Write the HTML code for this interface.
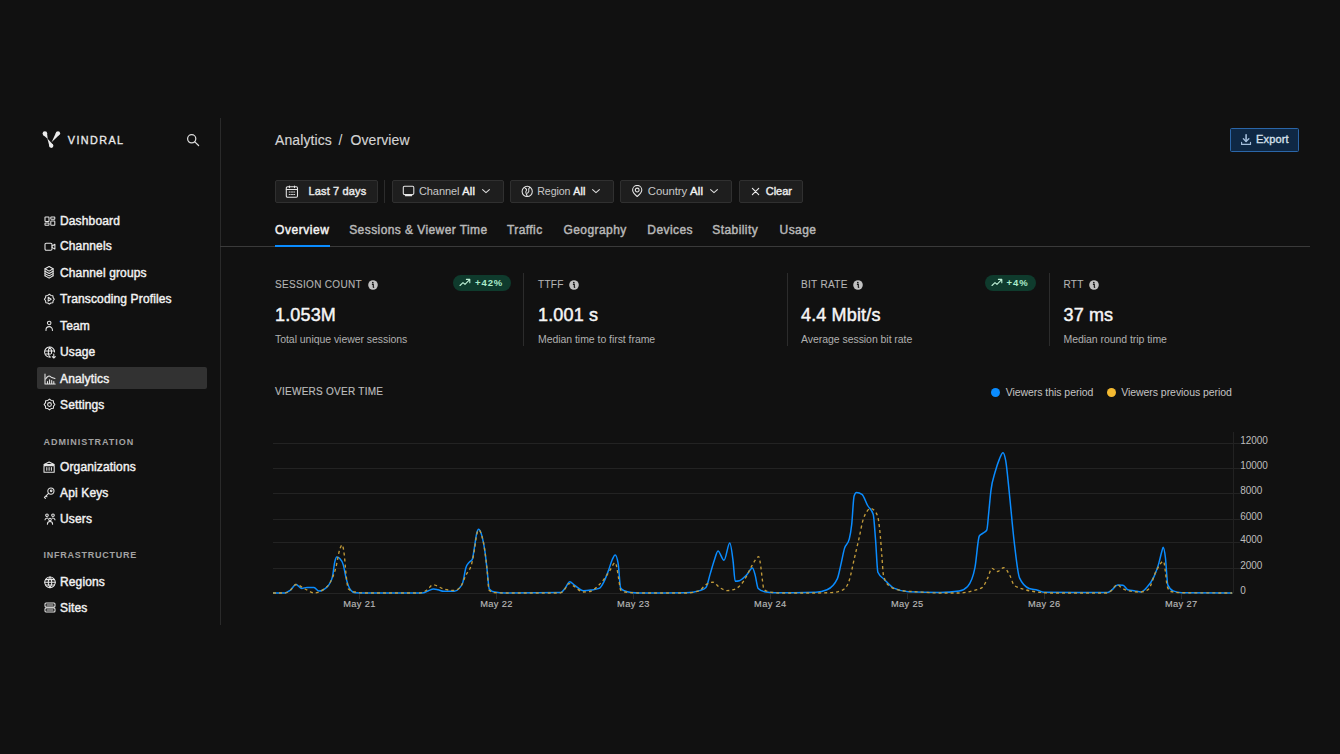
<!DOCTYPE html>
<html><head><meta charset="utf-8"><style>
html,body{margin:0;padding:0;background:#111111;width:1340px;height:754px;overflow:hidden;}
body{position:relative;font-family:"Liberation Sans", sans-serif;}
.t{position:absolute;white-space:nowrap;font-family:"Liberation Sans", sans-serif;}
</style></head><body>
<svg style="position:absolute;left:40px;top:128px;" width="24" height="24" viewBox="0 0 24 24" fill="none"><g fill="#ececec"><circle cx="4.9" cy="5.6" r="2.3"/><path d="M6.9 4.5 L7.8 10.9 L2.9 6.7 Z"/><circle cx="11.3" cy="17.8" r="2.1"/><path d="M13.1 16.8 L7.4 10.6 L9.5 18.8 Z"/><circle cx="18" cy="5.3" r="2.1"/><path d="M19.7 6.5 L11.6 14.3 L16.3 4.1 Z"/></g></svg>
<div class="t" style="left:67.8px;top:135.16px;font-size:10.8px;line-height:10.8px;font-weight:400;color:#ececec;letter-spacing:1.4px;-webkit-text-stroke:0.3px #ececec;">VINDRAL</div>
<svg style="position:absolute;left:182px;top:128px;" width="24" height="24" viewBox="0 0 24 24" fill="none"><circle cx="9.7" cy="10.8" r="4.1" stroke="#dcdcdc" stroke-width="1.25"/><path d="M12.8 13.9 L16.6 17.5" stroke="#dcdcdc" stroke-width="1.25" stroke-linecap="round"/></svg>
<div style="position:absolute;left:220px;top:118px;width:1px;height:507px;background:#2a2a2a"></div>
<div style="position:absolute;left:37px;top:367px;width:170px;height:22.4px;background:#323232;border-radius:2px"></div>
<div class="t" style="left:60px;top:215.34px;font-size:12px;line-height:12px;font-weight:400;color:#f2f2f2;letter-spacing:0.14px;-webkit-text-stroke:0.42px #f2f2f2;">Dashboard</div>
<div class="t" style="left:60px;top:240.34px;font-size:12px;line-height:12px;font-weight:400;color:#f2f2f2;letter-spacing:0.14px;-webkit-text-stroke:0.42px #f2f2f2;">Channels</div>
<div class="t" style="left:60px;top:266.74px;font-size:12px;line-height:12px;font-weight:400;color:#f2f2f2;letter-spacing:0.14px;-webkit-text-stroke:0.42px #f2f2f2;">Channel groups</div>
<div class="t" style="left:60px;top:292.94px;font-size:12px;line-height:12px;font-weight:400;color:#f2f2f2;letter-spacing:0.14px;-webkit-text-stroke:0.42px #f2f2f2;">Transcoding Profiles</div>
<div class="t" style="left:60px;top:319.74px;font-size:12px;line-height:12px;font-weight:400;color:#f2f2f2;letter-spacing:0.14px;-webkit-text-stroke:0.42px #f2f2f2;">Team</div>
<div class="t" style="left:60px;top:346.04px;font-size:12px;line-height:12px;font-weight:400;color:#f2f2f2;letter-spacing:0.14px;-webkit-text-stroke:0.42px #f2f2f2;">Usage</div>
<div class="t" style="left:60px;top:372.54px;font-size:12px;line-height:12px;font-weight:400;color:#f2f2f2;letter-spacing:0.14px;-webkit-text-stroke:0.42px #f2f2f2;">Analytics</div>
<div class="t" style="left:60px;top:398.74px;font-size:12px;line-height:12px;font-weight:400;color:#f2f2f2;letter-spacing:0.14px;-webkit-text-stroke:0.42px #f2f2f2;">Settings</div>
<div class="t" style="left:60px;top:461.04px;font-size:12px;line-height:12px;font-weight:400;color:#f2f2f2;letter-spacing:0.14px;-webkit-text-stroke:0.42px #f2f2f2;">Organizations</div>
<div class="t" style="left:60px;top:486.84px;font-size:12px;line-height:12px;font-weight:400;color:#f2f2f2;letter-spacing:0.14px;-webkit-text-stroke:0.42px #f2f2f2;">Api Keys</div>
<div class="t" style="left:60px;top:513.34px;font-size:12px;line-height:12px;font-weight:400;color:#f2f2f2;letter-spacing:0.14px;-webkit-text-stroke:0.42px #f2f2f2;">Users</div>
<div class="t" style="left:60px;top:576.34px;font-size:12px;line-height:12px;font-weight:400;color:#f2f2f2;letter-spacing:0.14px;-webkit-text-stroke:0.42px #f2f2f2;">Regions</div>
<div class="t" style="left:60px;top:601.84px;font-size:12px;line-height:12px;font-weight:400;color:#f2f2f2;letter-spacing:0.14px;-webkit-text-stroke:0.42px #f2f2f2;">Sites</div>
<div class="t" style="left:43.5px;top:437.88px;font-size:9px;line-height:9px;font-weight:700;color:#a3a3a3;letter-spacing:0.95px;">ADMINISTRATION</div>
<div class="t" style="left:43.5px;top:550.98px;font-size:9px;line-height:9px;font-weight:700;color:#a3a3a3;letter-spacing:0.75px;">INFRASTRUCTURE</div>
<div class="t" style="left:275px;top:133.05px;font-size:14px;line-height:14px;font-weight:400;color:#d4d4d4;letter-spacing:0.1px;-webkit-text-stroke:0.15px #d4d4d4;">Analytics</div>
<div class="t" style="left:338.5px;top:133.05px;font-size:14px;line-height:14px;font-weight:400;color:#d4d4d4;letter-spacing:0px;">/</div>
<div class="t" style="left:350.5px;top:133.05px;font-size:14px;line-height:14px;font-weight:400;color:#d4d4d4;letter-spacing:0.1px;-webkit-text-stroke:0.15px #d4d4d4;">Overview</div>
<div style="position:absolute;left:1230px;top:128px;width:69px;height:24px;box-sizing:border-box;border:1px solid #2b66a8;background:#0f2844;border-radius:1.5px"></div>
<div class="t" style="left:1256px;top:133.79px;font-size:11px;line-height:11px;font-weight:400;color:#d6e1ed;letter-spacing:0.15px;-webkit-text-stroke:0.35px #d6e1ed;">Export</div>
<div style="position:absolute;left:275px;top:180px;width:103px;height:23px;box-sizing:border-box;border:1px solid #303030;background:#1e1e1e;border-radius:2px"></div>
<div class="t" style="left:308.5px;top:185.89px;font-size:11px;line-height:11px;font-weight:400;color:#ececec;letter-spacing:0.15px;-webkit-text-stroke:0.4px #ececec;">Last 7 days</div>
<div style="position:absolute;left:384px;top:180px;width:1px;height:23px;background:#2c2c2c"></div>
<div style="position:absolute;left:392px;top:180px;width:112px;height:23px;box-sizing:border-box;border:1px solid #303030;background:#1e1e1e;border-radius:2px"></div>
<div class="t" style="left:419px;top:185.89px;font-size:11px;line-height:11px;font-weight:400;color:#c8c8c8;letter-spacing:-0.1px;">Channel <span style="color:#f2f2f2;-webkit-text-stroke:0.4px #f2f2f2;letter-spacing:0.2px">All</span></div>
<div style="position:absolute;left:510px;top:180px;width:104px;height:23px;box-sizing:border-box;border:1px solid #303030;background:#1e1e1e;border-radius:2px"></div>
<div class="t" style="left:537.3px;top:186.23px;font-size:10.6px;line-height:10.6px;font-weight:400;color:#c8c8c8;letter-spacing:-0.1px;">Region <span style="color:#f2f2f2;-webkit-text-stroke:0.4px #f2f2f2;letter-spacing:0.2px">All</span></div>
<div style="position:absolute;left:620px;top:180px;width:112px;height:23px;box-sizing:border-box;border:1px solid #303030;background:#1e1e1e;border-radius:2px"></div>
<div class="t" style="left:647.8px;top:185.55px;font-size:11.4px;line-height:11.4px;font-weight:400;color:#c8c8c8;letter-spacing:-0.1px;">Country <span style="color:#f2f2f2;-webkit-text-stroke:0.4px #f2f2f2;letter-spacing:0.2px">All</span></div>
<div style="position:absolute;left:739px;top:180px;width:64px;height:23px;box-sizing:border-box;border:1px solid #303030;background:#1e1e1e;border-radius:2px"></div>
<div class="t" style="left:765.7px;top:185.89px;font-size:11px;line-height:11px;font-weight:400;color:#ececec;letter-spacing:0px;-webkit-text-stroke:0.4px #ececec;">Clear</div>
<div class="t" style="left:275px;top:223.74px;font-size:12px;line-height:12px;font-weight:400;color:#f4f4f4;letter-spacing:0.55px;-webkit-text-stroke:0.45px #f4f4f4;">Overview</div>
<div class="t" style="left:349.2px;top:223.74px;font-size:12px;line-height:12px;font-weight:400;color:#b8b8b8;letter-spacing:0.42px;-webkit-text-stroke:0.45px #b8b8b8;">Sessions &amp; Viewer Time</div>
<div class="t" style="left:507px;top:223.74px;font-size:12px;line-height:12px;font-weight:400;color:#b8b8b8;letter-spacing:0.42px;-webkit-text-stroke:0.45px #b8b8b8;">Traffic</div>
<div class="t" style="left:563.5px;top:223.74px;font-size:12px;line-height:12px;font-weight:400;color:#b8b8b8;letter-spacing:0.42px;-webkit-text-stroke:0.45px #b8b8b8;">Geography</div>
<div class="t" style="left:647.3px;top:223.74px;font-size:12px;line-height:12px;font-weight:400;color:#b8b8b8;letter-spacing:0.42px;-webkit-text-stroke:0.45px #b8b8b8;">Devices</div>
<div class="t" style="left:712.3px;top:223.74px;font-size:12px;line-height:12px;font-weight:400;color:#b8b8b8;letter-spacing:0.42px;-webkit-text-stroke:0.45px #b8b8b8;">Stability</div>
<div class="t" style="left:779.6px;top:223.74px;font-size:12px;line-height:12px;font-weight:400;color:#b8b8b8;letter-spacing:0.42px;-webkit-text-stroke:0.45px #b8b8b8;">Usage</div>
<div style="position:absolute;left:220px;top:246px;width:1090px;height:1px;background:#3a3a3a"></div>
<div style="position:absolute;left:275px;top:245px;width:55px;height:2px;background:#0a8cff"></div>
<div class="t" style="left:275px;top:279.54px;font-size:10px;line-height:10px;font-weight:400;color:#b4b4b4;letter-spacing:0.32px;-webkit-text-stroke:0.1px #b4b4b4;">SESSION COUNT</div>
<div class="t" style="left:275px;top:305.66px;font-size:18px;line-height:18px;font-weight:400;color:#f6f6f6;letter-spacing:0.15px;-webkit-text-stroke:0.45px #f6f6f6;">1.053M</div>
<div class="t" style="left:275px;top:333.61px;font-size:10.5px;line-height:10.5px;font-weight:400;color:#b0b0b0;letter-spacing:-0.05px;">Total unique viewer sessions</div>
<div class="t" style="left:538px;top:279.54px;font-size:10px;line-height:10px;font-weight:400;color:#b4b4b4;letter-spacing:0.32px;-webkit-text-stroke:0.1px #b4b4b4;">TTFF</div>
<div class="t" style="left:538px;top:305.66px;font-size:18px;line-height:18px;font-weight:400;color:#f6f6f6;letter-spacing:0.15px;-webkit-text-stroke:0.45px #f6f6f6;">1.001 s</div>
<div class="t" style="left:538px;top:333.61px;font-size:10.5px;line-height:10.5px;font-weight:400;color:#b0b0b0;letter-spacing:-0.05px;">Median time to first frame</div>
<div class="t" style="left:801px;top:279.54px;font-size:10px;line-height:10px;font-weight:400;color:#b4b4b4;letter-spacing:0.32px;-webkit-text-stroke:0.1px #b4b4b4;">BIT RATE</div>
<div class="t" style="left:801px;top:305.66px;font-size:18px;line-height:18px;font-weight:400;color:#f6f6f6;letter-spacing:0.15px;-webkit-text-stroke:0.45px #f6f6f6;">4.4 Mbit/s</div>
<div class="t" style="left:801px;top:333.61px;font-size:10.5px;line-height:10.5px;font-weight:400;color:#b0b0b0;letter-spacing:-0.05px;">Average session bit rate</div>
<div class="t" style="left:1063.5px;top:279.54px;font-size:10px;line-height:10px;font-weight:400;color:#b4b4b4;letter-spacing:0.32px;-webkit-text-stroke:0.1px #b4b4b4;">RTT</div>
<div class="t" style="left:1063.5px;top:305.66px;font-size:18px;line-height:18px;font-weight:400;color:#f6f6f6;letter-spacing:0.15px;-webkit-text-stroke:0.45px #f6f6f6;">37 ms</div>
<div class="t" style="left:1063.5px;top:333.61px;font-size:10.5px;line-height:10.5px;font-weight:400;color:#b0b0b0;letter-spacing:-0.05px;">Median round trip time</div>
<div style="position:absolute;left:523px;top:273px;width:1px;height:73px;background:#2c2c2c"></div>
<div style="position:absolute;left:787px;top:273px;width:1px;height:73px;background:#2c2c2c"></div>
<div style="position:absolute;left:1049px;top:273px;width:1px;height:73px;background:#2c2c2c"></div>
<div class="t" style="left:275px;top:387.14px;font-size:10px;line-height:10px;font-weight:400;color:#bcbcbc;letter-spacing:0.27px;-webkit-text-stroke:0.15px #bcbcbc;">VIEWERS OVER TIME</div>
<div style="position:absolute;left:991px;top:387.5px;width:9px;height:9px;border-radius:50%;background:#0a8cff"></div>
<div class="t" style="left:1005.7px;top:387.11px;font-size:10.5px;line-height:10.5px;font-weight:400;color:#c4c4c4;letter-spacing:-0.05px;">Viewers this period</div>
<div style="position:absolute;left:1107px;top:387.5px;width:9px;height:9px;border-radius:50%;background:#f3b931"></div>
<div class="t" style="left:1121.2px;top:387.11px;font-size:10.5px;line-height:10.5px;font-weight:400;color:#c4c4c4;letter-spacing:-0.05px;">Viewers previous period</div>
<svg style="position:absolute;left:43.5px;top:215.5px;" width="13" height="13" viewBox="0 0 13 13" fill="none"><g stroke="#e6e6e6" stroke-width="1.05" fill="none" stroke-linecap="round" stroke-linejoin="round"><rect x="1" y="1" width="4" height="4.4" rx="0.5"/><rect x="6.8" y="1" width="4" height="2.3" rx="0.5"/><rect x="1" y="7" width="4" height="2.3" rx="0.5"/><rect x="6.8" y="4.9" width="4" height="4.4" rx="0.5"/></g></svg>
<svg style="position:absolute;left:43.5px;top:241.5px;" width="13" height="13" viewBox="0 0 13 13" fill="none"><g stroke="#e6e6e6" stroke-width="1.05" fill="none" stroke-linecap="round" stroke-linejoin="round"><rect x="1" y="1.2" width="7" height="7" rx="1.2"/><path d="M8 4 L10.9 2.3 V7.1 L8 5.4"/></g></svg>
<svg style="position:absolute;left:44.2px;top:266.3px;" width="11" height="13" viewBox="0 0 11 13" fill="none"><g stroke="#e6e6e6" stroke-width="1.05" fill="none" stroke-linecap="round" stroke-linejoin="round"><path d="M5.15 0.5 L9.1 2.8 L5.15 5.1 L1 2.8 Z"/><path d="M1 5.2 L5.15 7.5 L9.1 5.2"/><path d="M1 7.6 L5.15 9.9 L9.1 7.6"/><path d="M1 2.8 V9.8 M9.1 2.8 V9.8"/><path d="M1 9.8 L5.15 12.1 L9.1 9.8"/></g></svg>
<svg style="position:absolute;left:43px;top:293px;" width="13" height="13" viewBox="0 0 13 13" fill="none"><g stroke="#e6e6e6" stroke-width="1.05" fill="none" stroke-linecap="round" stroke-linejoin="round"><path d="M6.35 1.25 L7.92 2.41 L9.85 2.70 L10.14 4.63 L11.30 6.20 L10.14 7.77 L9.85 9.70 L7.92 9.99 L6.35 11.15 L4.78 9.99 L2.85 9.70 L2.56 7.77 L1.40 6.20 L2.56 4.63 L2.85 2.70 L4.78 2.41 Z"/><path d="M5.2 4.3 L8.2 6.2 L5.2 8.1 Z"/></g></svg>
<svg style="position:absolute;left:44px;top:320px;" width="13" height="13" viewBox="0 0 13 13" fill="none"><g stroke="#e6e6e6" stroke-width="1.05" fill="none" stroke-linecap="round" stroke-linejoin="round"><circle cx="5.2" cy="2.9" r="1.75"/><path d="M2 10.5 V9.8 A3.2 3.2 0 0 1 8.4 9.8 V10.5"/></g></svg>
<svg style="position:absolute;left:43.5px;top:345.8px;" width="13" height="13" viewBox="0 0 13 13" fill="none"><g stroke="#e6e6e6" stroke-width="1.05" fill="none" stroke-linecap="round" stroke-linejoin="round"><path d="M10.6 6 A5 5 0 1 0 6.5 11"/><path d="M1.3 5 H10.5 M1.6 8 H6.5"/><path d="M5.8 1.2 C3.8 3.5 3.8 8.5 5.8 11 M5.8 1.2 C7.8 3.5 7.8 6 7.6 7.5"/><path d="M9.8 8 V12 M8.3 10.6 L9.8 12 L11.3 10.6"/></g></svg>
<svg style="position:absolute;left:43.5px;top:372.5px;" width="13" height="13" viewBox="0 0 13 13" fill="none"><g stroke="#e6e6e6" stroke-width="1.05" fill="none" stroke-linecap="round" stroke-linejoin="round"><path d="M1 0.9 V10.9 H11.2"/><path d="M1.6 6 C3.4 2.8 5.3 2.3 6.8 3.8 C8.2 5.1 9.6 4.8 11 5.6"/><path d="M3.5 10.4 V8.4 M5.6 10.4 V6.8 M7.7 10.4 V7.6 M9.8 10.4 V8.4"/></g></svg>
<svg style="position:absolute;left:43px;top:398px;" width="13" height="13" viewBox="0 0 13 13" fill="none"><g stroke="#e6e6e6" stroke-width="1.05" fill="none" stroke-linecap="round" stroke-linejoin="round"><path d="M6.50 1.10 L8.18 2.43 L10.32 2.68 L10.57 4.82 L11.90 6.50 L10.57 8.18 L10.32 10.32 L8.18 10.57 L6.50 11.90 L4.82 10.57 L2.68 10.32 L2.43 8.18 L1.10 6.50 L2.43 4.82 L2.68 2.68 L4.82 2.43 Z"/><circle cx="6.5" cy="6.5" r="1.9"/></g></svg>
<svg style="position:absolute;left:43.4px;top:460.8px;" width="13" height="13" viewBox="0 0 13 13" fill="none"><g stroke="#e6e6e6" stroke-width="1.05" fill="none" stroke-linecap="round" stroke-linejoin="round"><path d="M1 3.5 L6.1 1 L11.2 3.5 Z"/><rect x="1" y="4.6" width="10.2" height="6.6"/><path d="M3.8 6.5 V9.3 M6.1 6.5 V9.3 M8.4 6.5 V9.3"/></g></svg>
<svg style="position:absolute;left:43.4px;top:487.3px;" width="13" height="13" viewBox="0 0 13 13" fill="none"><g stroke="#e6e6e6" stroke-width="1.05" fill="none" stroke-linecap="round" stroke-linejoin="round"><circle cx="7.9" cy="4.1" r="3.1"/><circle cx="8.2" cy="3.8" r="0.8"/><path d="M5.6 6.3 L1.4 10.4 L2.4 11.4 M3 8.8 L4 9.8"/></g></svg>
<svg style="position:absolute;left:43.5px;top:513.3px;" width="13" height="13" viewBox="0 0 13 13" fill="none"><g stroke="#e6e6e6" stroke-width="1.05" fill="none" stroke-linecap="round" stroke-linejoin="round"><circle cx="3" cy="2.2" r="1.3"/><circle cx="9" cy="2.2" r="1.3"/><circle cx="6" cy="6.5" r="1.3"/><path d="M1 6.8 A2.2 2.2 0 0 1 3.8 5.2 M11 6.8 A2.2 2.2 0 0 0 8.2 5.2"/><path d="M3.4 11.2 A2.6 2.6 0 0 1 8.6 11.2"/></g></svg>
<svg style="position:absolute;left:43.5px;top:575.6px;" width="13" height="13" viewBox="0 0 13 13" fill="none"><g stroke="#e6e6e6" stroke-width="1.05" fill="none" stroke-linecap="round" stroke-linejoin="round"><circle cx="6" cy="6.3" r="5.3"/><path d="M0.8 6.3 H11.2 M1.5 3.6 H10.5 M1.5 9 H10.5"/><path d="M6 1 C3.6 3.5 3.6 9 6 11.6 C8.4 9 8.4 3.5 6 1"/></g></svg>
<svg style="position:absolute;left:43.5px;top:602.4px;" width="13" height="13" viewBox="0 0 13 13" fill="none"><g stroke="#e6e6e6" stroke-width="1.05" fill="none" stroke-linecap="round" stroke-linejoin="round"><rect x="1" y="1" width="10" height="4.1" rx="1"/><rect x="1" y="5.9" width="10" height="4.1" rx="1"/><path d="M3 3 H9 M3 8 H9"/></g></svg>
<svg style="position:absolute;left:285px;top:185px;" width="14" height="14" viewBox="0 0 14 14" fill="none"><g stroke="#e6e6e6" stroke-width="1.05" fill="none" stroke-linecap="round" stroke-linejoin="round"><rect x="1.3" y="1.8" width="11.2" height="10.4" rx="1.2"/><path d="M1.3 4.4 H12.5 M4.4 1 V2.6 M9.5 1 V2.6"/><path d="M4.2 7 H5.2 M6.5 7 H7.5 M8.7 7 H9.7 M4.2 9.5 H5.2 M6.5 9.5 H7.5 M8.7 9.5 H9.7" stroke-width="0.9"/></g></svg>
<svg style="position:absolute;left:402px;top:185px;" width="13" height="12" viewBox="0 0 13 12" fill="none"><g stroke="#e6e6e6" stroke-width="1.05" fill="none" stroke-linecap="round" stroke-linejoin="round"><rect x="1.3" y="1.2" width="10.5" height="8.3" rx="1.2"/><path d="M3.3 10.6 H9.8"/></g></svg>
<svg style="position:absolute;left:521px;top:185px;" width="13" height="13" viewBox="0 0 13 13" fill="none"><g stroke="#e6e6e6" stroke-width="1.05" fill="none" stroke-linecap="round" stroke-linejoin="round"><circle cx="6.2" cy="6.4" r="5.1"/><path d="M3.6 2.6 C4.2 3.6 5.6 3.4 5.6 4.8 C5.6 6 4.4 6.2 4.9 7.6 L6.2 11.2 M8.9 2.2 C8.1 3.2 7.2 3.8 7.8 5.2 C8.2 6.2 7.4 7.4 6.6 8.2"/></g></svg>
<svg style="position:absolute;left:631px;top:185px;" width="13" height="13" viewBox="0 0 13 13" fill="none"><g stroke="#e6e6e6" stroke-width="1.05" fill="none" stroke-linecap="round" stroke-linejoin="round"><path d="M6.2 11.5 C3.6 9.3 1.6 7.3 1.6 5 A4.6 4.6 0 0 1 10.8 5 C10.8 7.3 8.8 9.3 6.2 11.5 Z"/><circle cx="6.2" cy="5" r="1.9"/></g></svg>
<svg style="position:absolute;left:481.1px;top:187px;" width="10" height="8" viewBox="0 0 10 8" fill="none"><path d="M1.6 2.6 L5 5.6 L8.4 2.6" stroke="#dcdcdc" stroke-width="1.1" fill="none" stroke-linecap="round" stroke-linejoin="round"/></svg>
<svg style="position:absolute;left:591.3px;top:187px;" width="10" height="8" viewBox="0 0 10 8" fill="none"><path d="M1.6 2.6 L5 5.6 L8.4 2.6" stroke="#dcdcdc" stroke-width="1.1" fill="none" stroke-linecap="round" stroke-linejoin="round"/></svg>
<svg style="position:absolute;left:709.4px;top:187px;" width="10" height="8" viewBox="0 0 10 8" fill="none"><path d="M1.6 2.6 L5 5.6 L8.4 2.6" stroke="#dcdcdc" stroke-width="1.1" fill="none" stroke-linecap="round" stroke-linejoin="round"/></svg>
<svg style="position:absolute;left:750px;top:186px;" width="11" height="11" viewBox="0 0 11 11" fill="none"><path d="M2.4 2.4 L8.7 8.6 M8.7 2.4 L2.4 8.6" stroke="#ececec" stroke-width="1.15" stroke-linecap="round"/></svg>
<svg style="position:absolute;left:1240px;top:133px;" width="12" height="13" viewBox="0 0 12 13" fill="none"><g stroke="#a4bedb" fill="none" stroke-linecap="round" stroke-linejoin="round"><path d="M6.1 1.8 V8.2" stroke-width="1.6"/><path d="M3.4 5.8 L6.1 8.4 L8.8 5.8" stroke-width="1.4"/><path d="M1.6 9.4 V11.4 H10.5 V9.4" stroke-width="1.2"/></g></svg>
<svg style="position:absolute;left:367.6px;top:279.8px;" width="10" height="10" viewBox="0 0 10 10" fill="none"><circle cx="5" cy="5" r="4.8" fill="#c2c2c2"/><circle cx="4.8" cy="2.6" r="0.85" fill="#151515"/><path d="M3.9 4.3 H5.3 V7.4 M5.3 7.4 H6.2" stroke="#151515" stroke-width="1.15" fill="none"/></svg>
<svg style="position:absolute;left:568.9px;top:279.8px;" width="10" height="10" viewBox="0 0 10 10" fill="none"><circle cx="5" cy="5" r="4.8" fill="#c2c2c2"/><circle cx="4.8" cy="2.6" r="0.85" fill="#151515"/><path d="M3.9 4.3 H5.3 V7.4 M5.3 7.4 H6.2" stroke="#151515" stroke-width="1.15" fill="none"/></svg>
<svg style="position:absolute;left:852.5px;top:279.8px;" width="10" height="10" viewBox="0 0 10 10" fill="none"><circle cx="5" cy="5" r="4.8" fill="#c2c2c2"/><circle cx="4.8" cy="2.6" r="0.85" fill="#151515"/><path d="M3.9 4.3 H5.3 V7.4 M5.3 7.4 H6.2" stroke="#151515" stroke-width="1.15" fill="none"/></svg>
<svg style="position:absolute;left:1089.3px;top:279.8px;" width="10" height="10" viewBox="0 0 10 10" fill="none"><circle cx="5" cy="5" r="4.8" fill="#c2c2c2"/><circle cx="4.8" cy="2.6" r="0.85" fill="#151515"/><path d="M3.9 4.3 H5.3 V7.4 M5.3 7.4 H6.2" stroke="#151515" stroke-width="1.15" fill="none"/></svg>
<div style="position:absolute;left:453px;top:275px;width:58px;height:16px;background:#0f3b2d;border-radius:8px"></div>
<svg style="position:absolute;left:459px;top:278px;" width="13" height="10" viewBox="0 0 13 10" fill="none"><path d="M1 7.5 L4 4.6 L6 6.4 L10.6 1.6 M7.4 1.4 H10.8 V4.8" stroke="#bff0d6" stroke-width="1.1" fill="none" stroke-linecap="round" stroke-linejoin="round"/></svg>
<div class="t" style="left:475px;top:278.16px;font-size:9.5px;line-height:9.5px;font-weight:700;color:#aaeccb;letter-spacing:0.9px;">+42%</div>
<div style="position:absolute;left:984.5px;top:275px;width:51px;height:16px;background:#0f3b2d;border-radius:8px"></div>
<svg style="position:absolute;left:990.5px;top:278px;" width="13" height="10" viewBox="0 0 13 10" fill="none"><path d="M1 7.5 L4 4.6 L6 6.4 L10.6 1.6 M7.4 1.4 H10.8 V4.8" stroke="#bff0d6" stroke-width="1.1" fill="none" stroke-linecap="round" stroke-linejoin="round"/></svg>
<div class="t" style="left:1006.5px;top:278.16px;font-size:9.5px;line-height:9.5px;font-weight:700;color:#aaeccb;letter-spacing:0.9px;">+4%</div>
<div style="position:absolute;left:273px;top:443px;width:967px;height:1px;background:#232323"></div>
<div class="t" style="left:1240.3px;top:435.54px;font-size:10px;line-height:10px;font-weight:400;color:#bdbdbd;letter-spacing:-0.1px;">12000</div>
<div style="position:absolute;left:273px;top:468px;width:967px;height:1px;background:#232323"></div>
<div class="t" style="left:1240.3px;top:460.54px;font-size:10px;line-height:10px;font-weight:400;color:#bdbdbd;letter-spacing:-0.1px;">10000</div>
<div style="position:absolute;left:273px;top:493px;width:967px;height:1px;background:#232323"></div>
<div class="t" style="left:1240.3px;top:485.54px;font-size:10px;line-height:10px;font-weight:400;color:#bdbdbd;letter-spacing:-0.1px;">8000</div>
<div style="position:absolute;left:273px;top:519px;width:967px;height:1px;background:#232323"></div>
<div class="t" style="left:1240.3px;top:511.54px;font-size:10px;line-height:10px;font-weight:400;color:#bdbdbd;letter-spacing:-0.1px;">6000</div>
<div style="position:absolute;left:273px;top:542px;width:967px;height:1px;background:#232323"></div>
<div class="t" style="left:1240.3px;top:534.53px;font-size:10px;line-height:10px;font-weight:400;color:#bdbdbd;letter-spacing:-0.1px;">4000</div>
<div style="position:absolute;left:273px;top:568px;width:967px;height:1px;background:#232323"></div>
<div class="t" style="left:1240.3px;top:560.53px;font-size:10px;line-height:10px;font-weight:400;color:#bdbdbd;letter-spacing:-0.1px;">2000</div>
<div class="t" style="left:1240.3px;top:585.53px;font-size:10px;line-height:10px;font-weight:400;color:#bdbdbd;letter-spacing:-0.1px;">0</div>
<div style="position:absolute;left:273px;top:593px;width:960px;height:1px;background:#242424"></div>
<div style="position:absolute;left:1233px;top:432px;width:1px;height:161px;background:#222"></div>
<div style="position:absolute;left:359px;top:593px;width:1px;height:6px;background:#2a2a2a"></div>
<div class="t" style="left:343.2px;top:600.03px;font-size:9.3px;line-height:9.3px;font-weight:400;color:#b8b8b8;letter-spacing:0.35px;-webkit-text-stroke:0.15px #b8b8b8;">May 21</div>
<div style="position:absolute;left:496px;top:593px;width:1px;height:6px;background:#2a2a2a"></div>
<div class="t" style="left:480.15px;top:600.03px;font-size:9.3px;line-height:9.3px;font-weight:400;color:#b8b8b8;letter-spacing:0.35px;-webkit-text-stroke:0.15px #b8b8b8;">May 22</div>
<div style="position:absolute;left:633px;top:593px;width:1px;height:6px;background:#2a2a2a"></div>
<div class="t" style="left:617.1px;top:600.03px;font-size:9.3px;line-height:9.3px;font-weight:400;color:#b8b8b8;letter-spacing:0.35px;-webkit-text-stroke:0.15px #b8b8b8;">May 23</div>
<div style="position:absolute;left:770px;top:593px;width:1px;height:6px;background:#2a2a2a"></div>
<div class="t" style="left:754.05px;top:600.03px;font-size:9.3px;line-height:9.3px;font-weight:400;color:#b8b8b8;letter-spacing:0.35px;-webkit-text-stroke:0.15px #b8b8b8;">May 24</div>
<div style="position:absolute;left:907px;top:593px;width:1px;height:6px;background:#2a2a2a"></div>
<div class="t" style="left:890.9999999999999px;top:600.03px;font-size:9.3px;line-height:9.3px;font-weight:400;color:#b8b8b8;letter-spacing:0.35px;-webkit-text-stroke:0.15px #b8b8b8;">May 25</div>
<div style="position:absolute;left:1044px;top:593px;width:1px;height:6px;background:#2a2a2a"></div>
<div class="t" style="left:1027.95px;top:600.03px;font-size:9.3px;line-height:9.3px;font-weight:400;color:#b8b8b8;letter-spacing:0.35px;-webkit-text-stroke:0.15px #b8b8b8;">May 26</div>
<div style="position:absolute;left:1181px;top:593px;width:1px;height:6px;background:#2a2a2a"></div>
<div class="t" style="left:1164.9px;top:600.03px;font-size:9.3px;line-height:9.3px;font-weight:400;color:#b8b8b8;letter-spacing:0.35px;-webkit-text-stroke:0.15px #b8b8b8;">May 27</div>
<svg style="position:absolute;left:0px;top:0px;" width="1340" height="754" viewBox="0 0 1340 754" fill="none"><path d="M273.0 593.0 C277.00 593.00 281.00 593.00 285.0 593.0 C286.67 593.00 288.33 591.71 290.0 590.5 C292.00 589.05 294.00 584.50 296.0 584.5 C297.93 584.50 299.87 588.40 301.8 588.4 C303.53 588.40 305.27 587.40 307.0 587.4 C309.33 587.40 311.67 587.40 314.0 587.4 C315.60 587.40 317.20 591.10 318.8 591.1 C320.20 591.10 321.60 590.70 323.0 590.0 C324.43 589.28 325.87 588.45 327.3 586.8 C328.20 585.76 329.10 584.82 330.0 583.0 C330.87 581.25 331.73 580.36 332.6 576.2 C333.30 572.84 334.00 565.58 334.7 562.4 C335.40 559.22 336.10 557.10 336.8 557.1 C337.87 557.10 338.93 557.63 340.0 558.7 C341.07 559.77 342.13 561.15 343.2 564.6 C344.27 568.05 345.33 575.44 346.4 579.4 C347.80 584.60 349.20 588.24 350.6 590.0 C352.03 591.80 353.47 592.61 354.9 592.7 C358.27 592.90 361.63 593.00 365.0 593.0 C384.13 593.00 403.27 593.00 422.4 593.0 C424.27 593.00 426.13 591.67 428.0 591.0 C429.87 590.33 431.73 589.00 433.6 589.0 C435.07 589.00 436.53 589.48 438.0 589.8 C439.90 590.21 441.80 591.30 443.7 591.3 C447.23 591.30 450.77 591.30 454.3 591.3 C456.07 591.30 457.83 590.15 459.6 587.9 C460.67 586.54 461.73 586.07 462.8 582.6 C463.83 579.24 464.87 571.06 465.9 567.7 C466.97 564.23 468.03 563.80 469.1 562.4 C470.17 561.00 471.23 561.37 472.3 559.3 C473.00 557.94 473.70 551.74 474.4 547.6 C475.13 543.26 475.87 536.85 476.6 533.8 C477.30 530.89 478.00 529.30 478.7 529.3 C479.77 529.30 480.83 532.04 481.9 535.9 C482.93 539.64 483.97 544.35 485.0 551.8 C485.73 557.09 486.47 564.56 487.2 570.9 C487.90 576.95 488.60 588.18 489.3 589.0 C491.07 591.07 492.83 591.79 494.6 592.1 C498.07 592.70 501.53 593.00 505.0 593.0 C523.63 593.00 542.27 592.83 560.9 592.5 C562.10 592.48 563.30 590.34 564.5 589.0 C566.30 586.99 568.10 581.80 569.9 581.8 C571.27 581.80 572.63 583.85 574.0 584.8 C577.20 587.03 580.40 590.70 583.6 590.7 C585.97 590.70 588.33 590.43 590.7 590.1 C593.50 589.71 596.30 589.53 599.1 588.4 C600.70 587.75 602.30 584.88 603.9 581.8 C605.50 578.72 607.10 574.27 608.7 569.9 C609.87 566.71 611.03 562.27 612.2 559.7 C613.20 557.49 614.20 554.90 615.2 554.9 C616.20 554.90 617.20 557.90 618.2 563.9 C619.00 568.70 619.80 586.51 620.6 587.8 C621.80 589.73 623.00 590.09 624.2 590.7 C626.57 591.90 628.93 592.23 631.3 592.5 C634.20 592.83 637.10 593.00 640.0 593.0 C655.33 593.00 670.67 592.93 686.0 592.8 C690.57 592.76 695.13 592.07 699.7 590.6 C701.80 589.93 703.90 589.57 706.0 587.5 C707.40 586.12 708.80 578.49 710.2 573.9 C711.57 569.42 712.93 564.28 714.3 560.3 C715.53 556.71 716.77 550.90 718.0 550.9 C720.00 550.90 722.00 560.30 724.0 560.3 C725.93 560.30 727.87 543.10 729.8 543.1 C730.90 543.10 732.00 552.57 733.1 561.3 C733.80 566.86 734.50 581.20 735.2 581.2 C736.60 581.20 738.00 581.03 739.4 580.7 C741.83 580.12 744.27 577.35 746.7 574.9 C748.63 572.96 750.57 568.10 752.5 568.1 C753.37 568.10 754.23 571.93 755.1 574.9 C756.13 578.44 757.17 587.45 758.2 588.5 C760.30 590.63 762.40 591.30 764.5 591.7 C768.00 592.37 771.50 592.70 775.0 592.7 C788.63 592.70 802.27 592.53 815.9 592.2 C819.60 592.11 823.30 591.40 827.0 589.8 C830.47 588.30 833.93 586.07 837.4 578.6 C838.47 576.30 839.53 570.38 840.6 565.9 C841.90 560.44 843.20 552.77 844.5 548.4 C846.10 543.02 847.70 545.23 849.3 538.9 C850.10 535.73 850.90 531.67 851.7 524.5 C852.50 517.33 853.30 498.23 854.1 495.9 C854.90 493.57 855.70 492.40 856.5 492.4 C858.33 492.40 860.17 493.03 862.0 494.3 C863.87 495.59 865.73 502.18 867.6 505.5 C869.47 508.82 871.33 508.40 873.2 514.2 C874.00 516.69 874.80 530.56 875.6 540.5 C876.37 550.02 877.13 570.60 877.9 572.3 C880.03 577.03 882.17 577.20 884.3 579.4 C887.50 582.70 890.70 586.63 893.9 588.2 C898.67 590.53 903.43 591.46 908.2 591.7 C918.80 592.23 929.40 592.50 940.0 592.5 C946.37 592.50 952.73 592.00 959.1 591.0 C961.93 590.55 964.77 589.47 967.6 586.4 C970.07 583.73 972.53 580.03 975.0 567.3 C976.43 559.90 977.87 538.17 979.3 536.0 C980.53 534.13 981.77 534.19 983.0 533.2 C984.27 532.19 985.53 532.13 986.8 530.0 C987.47 528.88 988.13 518.34 988.8 512.0 C989.50 505.34 990.20 496.65 990.9 490.9 C992.33 479.13 993.77 477.14 995.2 471.8 C996.60 466.59 998.00 462.39 999.4 459.1 C1000.60 456.28 1001.80 452.70 1003.0 452.7 C1003.93 452.70 1004.87 455.77 1005.8 461.2 C1006.83 467.21 1007.87 479.18 1008.9 488.8 C1010.67 505.24 1012.43 526.95 1014.2 541.8 C1015.97 556.65 1017.73 574.00 1019.5 577.9 C1022.70 584.97 1025.90 587.22 1029.1 588.5 C1031.93 589.63 1034.77 589.43 1037.6 590.2 C1039.73 590.78 1041.87 592.29 1044.0 592.3 C1065.17 592.43 1086.33 592.50 1107.5 592.5 C1109.07 592.50 1110.63 590.85 1112.2 589.7 C1114.00 588.38 1115.80 584.90 1117.6 584.9 C1119.40 584.90 1121.20 585.00 1123.0 585.2 C1124.60 585.38 1126.20 589.16 1127.8 589.7 C1130.17 590.50 1132.53 590.50 1134.9 590.9 C1136.90 591.24 1138.90 591.90 1140.9 591.9 C1142.90 591.90 1144.90 589.51 1146.9 587.3 C1149.27 584.68 1151.63 581.92 1154.0 576.6 C1155.60 573.00 1157.20 569.00 1158.8 563.4 C1159.80 559.90 1160.80 554.81 1161.8 551.5 C1162.27 549.96 1162.73 547.30 1163.2 547.3 C1163.93 547.30 1164.67 551.72 1165.4 557.5 C1166.20 563.80 1167.00 583.09 1167.8 584.9 C1169.57 588.90 1171.33 590.14 1173.1 590.9 C1175.90 592.10 1178.70 592.67 1181.5 592.7 C1198.40 592.90 1215.30 592.95 1232.2 593.0" stroke="#0a8cff" stroke-width="1.5" stroke-linejoin="round"/><path d="M273.0 593.0 C277.00 593.00 281.00 593.00 285.0 593.0 C286.67 593.00 288.33 591.71 290.0 590.5 C292.00 589.05 294.00 584.50 296.0 584.5 C299.00 584.50 302.00 587.62 305.0 589.0 C308.20 590.47 311.40 593.00 314.6 593.0 C316.00 593.00 317.40 592.55 318.8 592.0 C320.53 591.32 322.27 590.34 324.0 589.0 C325.80 587.60 327.60 586.72 329.4 583.7 C331.53 580.12 333.67 575.67 335.8 567.7 C337.20 562.47 338.60 552.37 340.0 548.6 C340.70 546.72 341.40 544.90 342.1 544.9 C342.83 544.90 343.57 548.81 344.3 555.0 C344.83 559.50 345.37 568.04 345.9 573.0 C346.77 581.07 347.63 588.20 348.5 589.0 C350.67 591.00 352.83 591.57 355.0 592.0 C358.33 592.67 361.67 593.00 365.0 593.0 C383.33 593.00 401.67 593.00 420.0 593.0 C422.33 593.00 424.67 591.57 427.0 590.0 C429.00 588.65 431.00 584.70 433.0 584.7 C436.57 584.70 440.13 588.03 443.7 589.0 C447.13 589.93 450.57 590.50 454.0 590.5 C455.87 590.50 457.73 589.67 459.6 588.0 C461.70 586.12 463.80 579.54 465.9 575.2 C467.93 571.00 469.97 570.93 472.0 562.4 C472.80 559.04 473.60 554.82 474.4 550.0 C475.13 545.58 475.87 538.34 476.6 535.0 C477.30 531.82 478.00 530.00 478.7 530.0 C479.77 530.00 480.83 532.22 481.9 536.0 C482.93 539.66 483.97 544.57 485.0 552.0 C485.73 557.28 486.47 563.89 487.2 571.0 C487.80 576.82 488.40 589.38 489.0 590.0 C490.67 591.73 492.33 592.48 494.0 592.6 C497.67 592.87 501.33 593.00 505.0 593.0 C523.33 593.00 541.67 593.00 560.0 593.0 C561.50 593.00 563.00 591.07 564.5 589.5 C566.00 587.93 567.50 583.60 569.0 583.6 C571.00 583.60 573.00 585.82 575.0 587.0 C577.67 588.58 580.33 592.00 583.0 592.0 C585.33 592.00 587.67 591.83 590.0 591.5 C592.63 591.12 595.27 588.44 597.9 586.0 C599.90 584.15 601.90 582.00 603.9 579.4 C605.90 576.80 607.90 573.35 609.9 570.4 C611.67 567.79 613.43 562.70 615.2 562.7 C616.40 562.70 617.60 572.83 618.8 579.4 C619.40 582.68 620.00 589.45 620.6 590.0 C622.07 591.33 623.53 591.80 625.0 592.0 C630.00 592.67 635.00 593.00 640.0 593.0 C655.33 593.00 670.67 593.00 686.0 593.0 C690.57 593.00 695.13 592.17 699.7 590.5 C701.43 589.87 703.17 586.70 704.9 585.4 C707.53 583.42 710.17 582.20 712.8 582.2 C715.07 582.20 717.33 586.12 719.6 587.5 C722.03 588.98 724.47 590.60 726.9 590.6 C729.67 590.60 732.43 590.07 735.2 589.0 C738.00 587.92 740.80 585.20 743.6 581.2 C746.03 577.72 748.47 571.94 750.9 567.6 C752.30 565.10 753.70 562.20 755.1 560.3 C756.30 558.67 757.50 556.60 758.7 556.6 C759.40 556.60 760.10 561.78 760.8 566.6 C761.33 570.27 761.87 576.37 762.4 580.2 C762.93 584.03 763.47 589.17 764.0 589.6 C766.00 591.20 768.00 591.60 770.0 592.0 C773.33 592.67 776.67 593.00 780.0 593.0 C791.67 593.00 803.33 593.00 815.0 593.0 C820.60 593.00 826.20 592.87 831.8 592.6 C835.53 592.42 839.27 591.67 843.0 589.8 C845.10 588.75 847.20 586.60 849.3 580.2 C850.90 575.32 852.50 566.38 854.1 559.5 C855.70 552.62 857.30 545.86 858.9 538.9 C860.47 532.09 862.03 522.38 863.6 518.2 C866.00 511.80 868.40 508.60 870.8 508.6 C872.93 508.60 875.07 510.73 877.2 515.0 C878.23 517.07 879.27 524.53 880.3 535.7 C880.83 541.46 881.37 549.77 881.9 556.4 C882.43 563.03 882.97 573.54 883.5 575.5 C885.37 582.37 887.23 584.39 889.1 585.8 C893.33 589.00 897.57 589.95 901.8 590.6 C907.87 591.53 913.93 591.61 920.0 592.0 C926.67 592.43 933.33 593.00 940.0 593.0 C946.33 593.00 952.67 593.00 959.0 593.0 C963.27 593.00 967.53 592.09 971.8 591.0 C975.33 590.09 978.87 589.80 982.4 587.4 C984.17 586.20 985.93 581.50 987.7 577.9 C989.13 574.98 990.57 568.30 992.0 568.3 C993.77 568.30 995.53 571.50 997.3 571.5 C999.40 571.50 1001.50 567.70 1003.6 567.7 C1005.73 567.70 1007.87 571.82 1010.0 575.8 C1011.40 578.41 1012.80 584.17 1014.2 585.3 C1017.77 588.17 1021.33 588.50 1024.9 589.6 C1029.83 591.13 1034.77 591.73 1039.7 592.3 C1043.13 592.69 1046.57 593.00 1050.0 593.0 C1069.00 593.00 1088.00 593.00 1107.0 593.0 C1108.67 593.00 1110.33 591.42 1112.0 590.0 C1113.67 588.58 1115.33 584.50 1117.0 584.5 C1118.60 584.50 1120.20 586.93 1121.8 587.9 C1123.53 588.95 1125.27 590.10 1127.0 590.5 C1131.33 591.50 1135.67 592.00 1140.0 592.0 C1142.67 592.00 1145.33 591.23 1148.0 589.7 C1150.80 588.09 1153.60 575.49 1156.4 570.6 C1158.80 566.41 1161.20 561.30 1163.6 561.3 C1164.20 561.30 1164.80 567.67 1165.4 571.8 C1166.00 575.93 1166.60 584.25 1167.2 586.1 C1168.37 589.70 1169.53 591.23 1170.7 591.5 C1174.13 592.30 1177.57 592.66 1181.0 592.7 C1198.07 592.90 1215.13 592.95 1232.2 593.0" stroke="#c29b3a" stroke-width="1.35" stroke-dasharray="3 3"/></svg>
</body></html>
